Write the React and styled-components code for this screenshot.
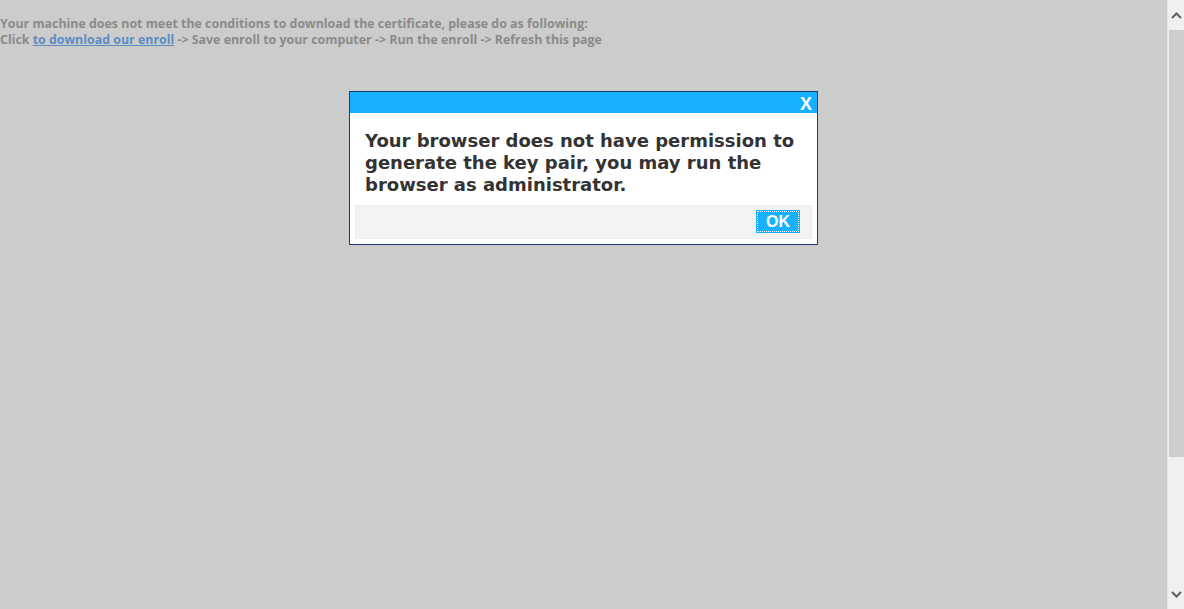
import React from "react";
import styled, { createGlobalStyle } from "styled-components";

const GlobalStyle = createGlobalStyle`
  html, body {
    margin: 0;
    padding: 0;
    height: 100%;
    overflow: hidden;
  }
  body {
    background: #cccccc;
    font-family: "Open Sans", "Liberation Sans", sans-serif;
  }
`;

const Page = styled.div`
  display: flex;
  height: 609px;
  width: 1184px;
  background: #cccccc;
`;

const Main = styled.div`
  flex: 1;
  display: flex;
  flex-direction: column;
`;

const Notice = styled.div`
  padding-top: 16px;
  font-size: 12.4px;
  font-weight: 700;
  line-height: 16px;
  color: #8a8a8a;
  white-space: nowrap;

  a {
    color: #5b8cc4;
    text-decoration: underline;
  }
`;

const Dialog = styled.div`
  align-self: center;
  margin-top: 43px;
  width: 467px;
  border: 1px solid #1e3a6c;
  background: #fff;
  display: flex;
  flex-direction: column;
`;

const TitleBar = styled.div`
  height: 21px;
  background: #17b1ff;
  display: flex;
  justify-content: flex-end;
  align-items: center;
  padding-right: 5px;
`;

const Close = styled.span`
  font-family: "Liberation Sans", Arial, sans-serif;
  font-weight: 700;
  font-size: 18px;
  line-height: 18px;
  color: #fff;
  margin-top: 2px;
`;

const Message = styled.p`
  margin: 0;
  padding: 17px 10px 9px 15px;
  font-family: "DejaVu Sans", Verdana, sans-serif;
  font-weight: 700;
  font-size: 18px;
  line-height: 22px;
  color: #333;
`;

const Footer = styled.div`
  margin: 0 5px 5px;
  height: 34px;
  box-sizing: border-box;
  background: #f3f3f3;
  border: 1px solid #ededed;
  display: flex;
  justify-content: flex-end;
  align-items: flex-start;
  padding: 4px 11px 0 0;
`;

const OkButton = styled.button`
  width: 44px;
  height: 23px;
  padding: 0;
  border: none;
  background: #17b1ff;
  color: #fff;
  font-family: "Liberation Sans", Arial, sans-serif;
  font-weight: 700;
  font-size: 16px;
  outline: 1px dotted #fff;
  outline-offset: -2px;
  cursor: pointer;
`;

const Scrollbar = styled.div`
  width: 16px;
  border-left: 1px solid #e6e6e6;
  background: #f0f0f0;
  display: flex;
  flex-direction: column;
  align-items: center;
`;

const Arrow = styled.div`
  height: ${(p) => p.$h}px;
  display: flex;
  align-items: center;
  justify-content: center;
`;

const Thumb = styled.div`
  width: 15px;
  height: 427px;
  background: #cdcdcd;
`;

const Spacer = styled.div`
  flex: 1;
`;

const Chevron = ({ up }) => (
  <svg width="11" height="7" viewBox="0 0 11 7">
    <path
      d={up ? "M1 6 L5.5 1.5 L10 6" : "M1 1 L5.5 5.5 L10 1"}
      fill="none"
      stroke="#606060"
      strokeWidth="2"
    />
  </svg>
);

export default function App() {
  return (
    <>
      <GlobalStyle />
      <Page>
        <Main>
          <Notice>
            Your machine does not meet the conditions to download the certificate, please do as following:
            <br />
            Click <a href="#">to download our enroll</a> -&gt; Save enroll to your computer -&gt; Run the enroll
            -&gt; Refresh this page
          </Notice>
          <Dialog>
            <TitleBar>
              <Close>X</Close>
            </TitleBar>
            <Message>
              Your browser does not have permission to generate the key pair, you may run the browser as
              administrator.
            </Message>
            <Footer>
              <OkButton>OK</OkButton>
            </Footer>
          </Dialog>
        </Main>
        <Scrollbar>
          <Arrow $h={30}>
            <Chevron up />
          </Arrow>
          <Thumb />
          <Spacer />
          <Arrow $h={30}>
            <Chevron />
          </Arrow>
        </Scrollbar>
      </Page>
    </>
  );
}
